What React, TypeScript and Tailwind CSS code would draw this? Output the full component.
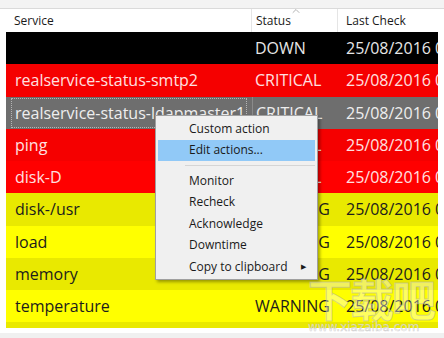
import { ChevronUp } from "lucide-react"

type Row = {
  service: string
  status: string
  bg: string
  text: string
  selected?: boolean
}

const rows: Row[] = [
  { service: "", status: "DOWN", bg: "bg-black", text: "text-[#e6e6e6]" },
  { service: "realservice-status-smtp2", status: "CRITICAL", bg: "bg-[#f50000]", text: "text-[#ffe0e0]" },
  { service: "realservice-status-ldapmaster1", status: "CRITICAL", bg: "bg-[#6e6e6e]", text: "text-[#eeeeee]", selected: true },
  { service: "ping", status: "CRITICAL", bg: "bg-[#f50000]", text: "text-[#ffe0e0]" },
  { service: "disk-D", status: "CRITICAL", bg: "bg-[#ff0000]", text: "text-[#ffe0e0]" },
  { service: "disk-/usr", status: "WARNING", bg: "bg-[#e9e900]", text: "text-[#1c1c1c]" },
  { service: "load", status: "WARNING", bg: "bg-[#ffff00]", text: "text-[#1c1c1c]" },
  { service: "memory", status: "WARNING", bg: "bg-[#e9e900]", text: "text-[#1c1c1c]" },
  { service: "temperature", status: "WARNING", bg: "bg-[#ffff00]", text: "text-[#1c1c1c]" },
]

function ContextMenu() {
  const item = "h-[21.5px] flex items-center pl-[31px] pr-2 whitespace-nowrap"
  return (
    <div className="absolute left-[155px] top-[115px] w-[163px] h-[165px] bg-[#f0f0f0] border border-[#a0a0a0] shadow-[2px_2px_3px_rgba(0,0,0,0.35)] py-[2px] px-[2px] text-[12px] text-[#1a1a1a] font-['Open_Sans',sans-serif]">
      <div className={item}>Custom action</div>
      <div className={`${item} bg-[#91c9f7]`}>Edit actions...</div>
      <div className="h-[9px] flex items-center pl-[27px]">
        <div className="h-px w-full bg-[#d5d5d5]" />
      </div>
      <div className={item}>Monitor</div>
      <div className={item}>Recheck</div>
      <div className={item}>Acknowledge</div>
      <div className={item}>Downtime</div>
      <div className={`${item} justify-between`}>
        <span>Copy to clipboard</span>
        <span className="text-[7px] mr-[1px]">▶</span>
      </div>
    </div>
  )
}

export default function App() {
  return (
    <div className="relative w-[444px] h-[338px] overflow-hidden bg-white font-['Open_Sans',sans-serif]">
      <div className="h-[8px] bg-[#f3f3f3]" />
      <div className="flex h-[24px] border-t border-[#dadada] bg-white text-[12px] text-[#1a1a1a]">
        <div className="w-[252px] pl-[14px] flex items-center border-r border-[#e5e5e5]">Service</div>
        <div className="relative w-[86px] pl-[4px] flex items-center border-r border-[#e5e5e5]">
          Status
          <ChevronUp className="absolute left-[38px] top-[-4px] w-[12px] h-[12px] text-[#9a9a9a]" strokeWidth={1.5} />
        </div>
        <div className="flex-1 pl-[8px] flex items-center">Last Check</div>
      </div>
      <div className="ml-[6px] w-[432px] text-[16px] leading-none">
        {rows.map((r, i) => (
          <div key={i} className={`flex h-[32.25px] ${r.bg} ${r.text}`}>
            <div className="w-[246px] relative flex items-center pl-[9px] overflow-hidden whitespace-nowrap">
              {r.selected && <div className="absolute inset-x-[5px] inset-y-[1px] border border-dotted border-[#b5b5b5]" />}
              {r.service}
            </div>
            <div className={`w-[86px] flex items-center pl-[3px] whitespace-nowrap ${r.selected ? "border-l border-[#8a8a8a]" : ""}`}>
              {r.status}
            </div>
            <div className="flex-1 flex items-center pl-[8px] overflow-hidden whitespace-nowrap">25/08/2016 09:41:12</div>
          </div>
        ))}
        <div className="h-[6px] bg-[#e9e900]" />
      </div>
      <div className="h-[5px]" />
      <div className="h-[10px] bg-[#f0f0f0]" />
      <ContextMenu />
      <div className="absolute left-[308px] top-[276px] pointer-events-none select-none">
        <div className="text-[44px] leading-none tracking-[-2px] text-white/40 [-webkit-text-stroke:1px_rgba(170,170,170,0.5)] font-['Noto_Sans_CJK_SC',sans-serif] font-bold">
          下载吧
        </div>
        <div className="text-[12px] leading-none mt-[1px] text-white/70 [-webkit-text-stroke:0.5px_rgba(170,170,170,0.6)] font-['DejaVu_Sans',sans-serif]">
          www.xiazaiba.com
        </div>
      </div>
    </div>
  )
}
